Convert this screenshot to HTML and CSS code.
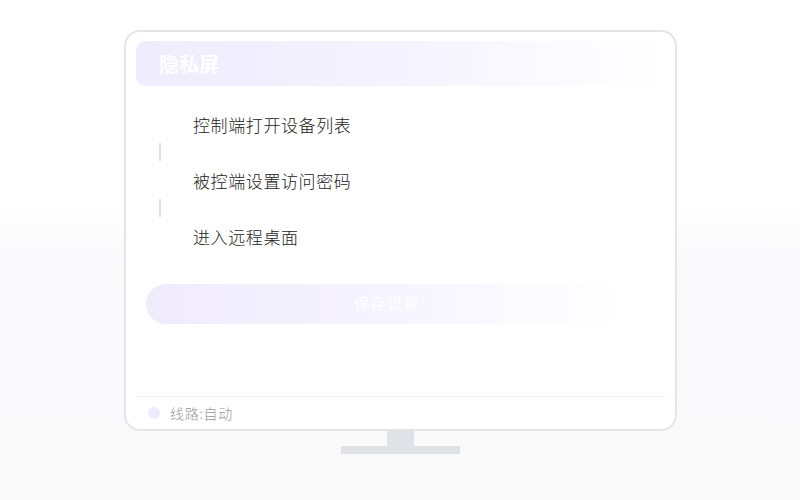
FILE: index.html
```html
<!DOCTYPE html>
<html lang="zh">
<head>
<meta charset="utf-8">
<link rel="stylesheet" href="styles.css">
</head>
<body>
<div class="stage">
  <div class="monitor">
    <div class="header">隐私屏</div>
    <div class="steps">
      <div class="step">控制端打开设备列表</div>
      <div class="connector"></div>
      <div class="step">被控端设置访问密码</div>
      <div class="connector"></div>
      <div class="step">进入远程桌面</div>
    </div>
    <div class="save">保存设置</div>
    <div class="spacer"></div>
    <div class="footer">
      <span class="dot"></span>
      <span class="route">线路:自动</span>
    </div>
  </div>
  <div class="neck"></div>
  <div class="base"></div>
</div>
</body>
</html>
```
FILE: styles.css
```css
html, body {
  margin: 0;
  padding: 0;
}
body {
  width: 800px;
  height: 500px;
  background: linear-gradient(180deg, #ffffff 0%, #ffffff 40%, #f9f9fb 53%, #fafafb 100%);
  font-family: "Noto Sans CJK SC", "Noto Sans", sans-serif;
  overflow: hidden;
}
.stage {
  display: flex;
  flex-direction: column;
  align-items: center;
  padding-top: 30px;
  padding-left: 1px;
}
.monitor {
  box-sizing: border-box;
  width: 553px;
  height: 401px;
  border: 2px solid #e3e5e9;
  border-radius: 16px;
  background: #ffffff;
  padding: 9px 10px 0 10px;
  display: flex;
  flex-direction: column;
}
.header {
  height: 45px;
  line-height: 45px;
  border-radius: 10px;
  background: linear-gradient(90deg, #efecfd 0%, #f5f3fe 50%, rgba(255,255,255,0) 100%);
  color: #ffffff;
  font-size: 20px;
  font-weight: 700;
  padding-left: 23px;
}
.steps {
  display: flex;
  flex-direction: column;
  margin-top: 27px;
}
.step {
  font-size: 17px;
  font-weight: 300;
  letter-spacing: 0.6px;
  line-height: 24px;
  height: 24px;
  color: #222222;
  padding-left: 57px;
}
.connector {
  width: 2px;
  height: 18px;
  background: #dfe0e8;
  margin: 6px 0 8px 23px;
}
.save {
  margin: 35px 38px 0 10px;
  height: 40px;
  line-height: 40px;
  border-radius: 20px;
  background: linear-gradient(90deg, #efebfd 0%, #f6f4fe 50%, rgba(255,255,255,0) 100%);
  color: #ffffff;
  font-family: serif;
  font-size: 16px;
  letter-spacing: 0.5px;
  text-align: center;
}
.spacer {
  flex: 1;
}
.footer {
  height: 32px;
  border-top: 1px solid #eef0f3;
  display: flex;
  align-items: center;
  padding-left: 12px;
  gap: 10px;
}
.dot {
  width: 12px;
  height: 12px;
  border-radius: 50%;
  background: #eeebfc;
}
.route {
  font-size: 14px;
  font-weight: 300;
  letter-spacing: 0.7px;
  color: #999999;
}
.neck {
  width: 27px;
  height: 15px;
  background: #dfe2e6;
}
.base {
  width: 119px;
  height: 8px;
  background: #dfe2e6;
}
```
